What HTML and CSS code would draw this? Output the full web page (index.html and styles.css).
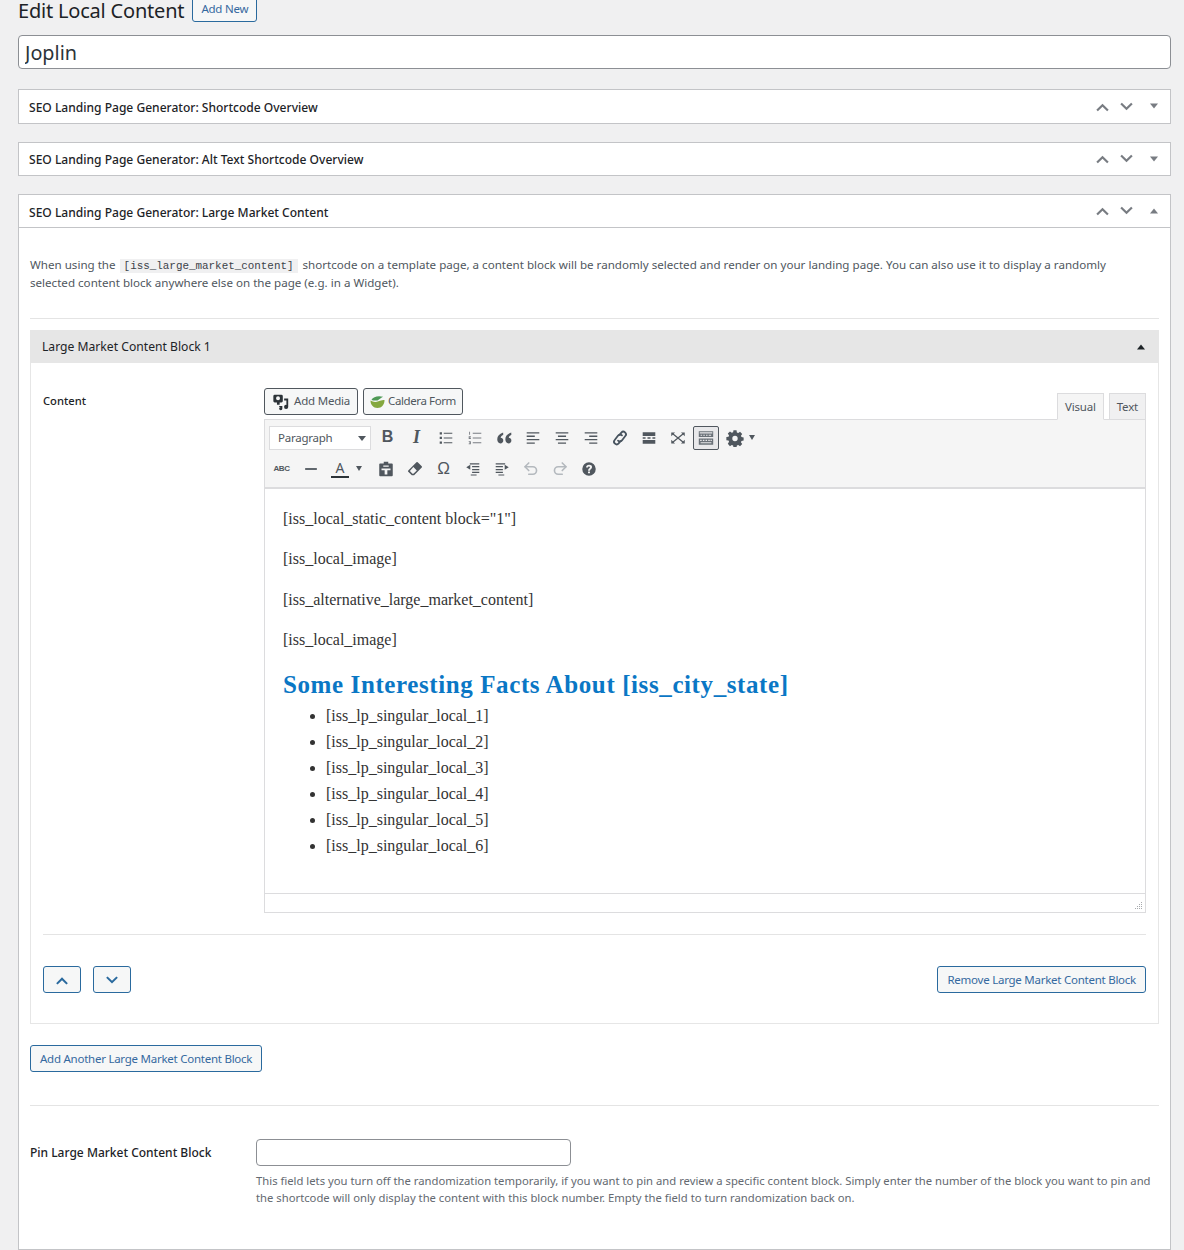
FILE: index.html
```html
<!DOCTYPE html>
<html lang="en">
<head>
<meta charset="utf-8">
<title>Edit Local Content</title>
<link rel="stylesheet" href="styles.css">
</head>
<body>
<div class="wrap">
  <div class="page-head">
    <h1>Edit Local Content</h1>
    <a class="btn add-new">Add New</a>
  </div>
  <input class="title-input" type="text" value="Joplin">

  <section class="postbox closed first">
    <header class="postbox-head">
      <h2>SEO Landing Page Generator: Shortcode Overview</h2>
      <div class="handles">
        <svg class="hicon" viewBox="0 0 20 20"><path d="M3.500 13.500 10 7l6.500 6.500-1.600 1.500L10 10.200 5.100 15z"/></svg>
        <svg class="hicon" viewBox="0 0 20 20"><path d="M3.500 7.500 10 14l6.500-6.500L14.900 6 10 10.800 5.100 6z"/></svg>
        <svg class="hcaret" viewBox="0 0 10 10"><path d="M1 2.500h8L5 7.500z"/></svg>
      </div>
    </header>
  </section>

  <section class="postbox closed">
    <header class="postbox-head">
      <h2>SEO Landing Page Generator: Alt Text Shortcode Overview</h2>
      <div class="handles">
        <svg class="hicon" viewBox="0 0 20 20"><path d="M3.500 13.500 10 7l6.500 6.500-1.600 1.500L10 10.200 5.100 15z"/></svg>
        <svg class="hicon" viewBox="0 0 20 20"><path d="M3.500 7.500 10 14l6.500-6.500L14.900 6 10 10.800 5.100 6z"/></svg>
        <svg class="hcaret" viewBox="0 0 10 10"><path d="M1 2.500h8L5 7.500z"/></svg>
      </div>
    </header>
  </section>

  <section class="postbox open">
    <header class="postbox-head">
      <h2>SEO Landing Page Generator: Large Market Content</h2>
      <div class="handles">
        <svg class="hicon" viewBox="0 0 20 20"><path d="M3.500 13.500 10 7l6.500 6.500-1.600 1.500L10 10.200 5.100 15z"/></svg>
        <svg class="hicon" viewBox="0 0 20 20"><path d="M3.500 7.500 10 14l6.500-6.500L14.900 6 10 10.800 5.100 6z"/></svg>
        <svg class="hcaret" viewBox="0 0 10 10"><path d="M1 7.500h8L5 2.500z"/></svg>
      </div>
    </header>
    <div class="postbox-body">
      <p class="intro">When using the <code>[iss_large_market_content]</code> shortcode on a template page, a content block will be randomly selected and render on your landing page. You can also use it to display a randomly selected content block anywhere else on the page (e.g. in a Widget).</p>

      <div class="group">
        <div class="group-head">
          <span>Large Market Content Block 1</span>
          <svg class="group-caret" viewBox="0 0 10 10"><path d="M1 7.500h8L5 2.500z"/></svg>
        </div>
        <div class="group-body">
          <div class="field-row">
            <div class="field-label">Content</div>
            <div class="editor">
              <div class="editor-top">
                <div class="media-buttons">
                  <a class="btn-dark">
                    <svg class="media-icon" viewBox="0 0 20 20"><path fill-rule="evenodd" d="M1.500 3.500A1.500 1.500 0 0 1 3 2h7.500A1.500 1.500 0 0 1 12 3.500V9a1.500 1.500 0 0 1-1.500 1.500h-2v2.500H5.500v-2.500H3A1.500 1.500 0 0 1 1.500 9zM4.500 5.800a2.200 2.200 0 1 0 4.400 0 2.200 2.200 0 0 0-4.400 0z"/><path d="M13.500 6H18v9.500a2.300 2.300 0 1 1-2-2.300V8.200h-2.500z"/><path d="M8 14.500h3.500v2.700a1.800 1.800 0 1 1-1.800-1.700H8z"/></svg>
                    <span>Add Media</span>
                  </a>
                  <a class="btn-dark caldera">
                    <svg class="caldera-icon" viewBox="0 0 16 16"><path d="M.5 7c2.500 1.500 5.500 2 8.500.8 2.200-.9 4.300-1.600 6.500-1.300 0 5-3 8.500-7.500 8.500S.5 11.500.5 7z" fill="#84a83f"/><path d="M1.500 6.300C3.500 3 8.500 1.500 14 3c-2 1-3.800 3-6 3.800-2.200.5-4.500.2-6.500-.5z" fill="#4f9a56"/></svg>
                    <span>Caldera Form</span>
                  </a>
                </div>
                <div class="tabs">
                  <span class="tab active">Visual</span>
                  <span class="tab tab-text">Text</span>
                </div>
              </div>
              <div class="editor-box">
                <div class="toolbar">
                  <div class="tool-row">
                    <div class="format-select"><span>Paragraph</span><i class="caret big"></i></div>
                    <span class="tool glyph-b">B</span>
                    <span class="tool glyph-i">I</span>
                    <span class="tool"><svg viewBox="0 0 20 20"><path d="M3 3.500h2.500V6H3zM3 8.700h2.500v2.500H3zM3 14h2.500v2.500H3zM7.500 4.200H17v1H7.500zM7.500 9.500H17v1H7.500zM7.500 14.700H17v1H7.500z"/></svg></span>
                    <span class="tool"><svg class="light" viewBox="0 0 20 20"><path d="M3.500 3h1v3.500h-1zM3 8h2.400v1.200H4v.6h1.400V11H3zM3 13.500h2.400V17H3v-.8h1.300v-.5H3.500v-.8h.8v-.5H3zM7.500 4.200H17v1H7.500zM7.500 9.500H17v1H7.500zM7.500 14.700H17v1H7.500z"/></svg></span>
                    <span class="tool"><svg viewBox="0 0 20 20"><path d="M9 4C4.800 5.400 2.500 8 2.500 11.500 2.500 14.300 4 16 6 16s3.200-1.400 3.200-3.200-1.300-3-3-3c.3-1.300 1.300-2.400 3-3.300zM18 4c-4.200 1.400-6.500 4-6.500 7.500 0 2.800 1.500 4.500 3.500 4.500s3.200-1.400 3.200-3.200-1.300-3-3-3c.3-1.300 1.300-2.400 3-3.300z"/></svg></span>
                    <span class="tool"><svg viewBox="0 0 20 20"><path d="M3 3.500h14V5H3zM3 7.300h9v1.500H3zM3 11.100h14v1.500H3zM3 15h9v1.500H3z"/></svg></span>
                    <span class="tool"><svg viewBox="0 0 20 20"><path d="M3 3.500h14V5H3zM5.500 7.300h9v1.500h-9zM3 11.100h14v1.500H3zM5.500 15h9v1.500h-9z"/></svg></span>
                    <span class="tool"><svg viewBox="0 0 20 20"><path d="M3 3.500h14V5H3zM8 7.300h9v1.500H8zM3 11.100h14v1.500H3zM8 15h9v1.500H8z"/></svg></span>
                    <span class="tool"><svg class="stroked link" viewBox="0 0 20 20"><path d="M9.500 6.500l2-2.500a2.900 2.900 0 0 1 4.400 3.800l-3.800 4.900a2.900 2.900 0 0 1-4.300.2"/><path d="M10.500 13.500l-2 2.500a2.900 2.900 0 0 1-4.400-3.800l3.800-4.900a2.900 2.900 0 0 1 4.300-.2"/></svg></span>
                    <span class="tool"><svg viewBox="0 0 20 20"><path d="M3 3.500h14v4.200H3zM3 9.300h3.200v1.400H3zM8.300 9.300h3.400v1.400H8.300zM13.800 9.300H17v1.400h-3.200zM3 12.300h14v4.200H3z"/></svg></span>
                    <span class="tool"><svg viewBox="0 0 20 20"><path d="M2.500 3.800h4.200L2.500 8zM17.500 3.800h-4.200L17.500 8zM2.500 16.200h4.200L2.500 12zM17.500 16.200h-4.200l4.200-4.200z"/><path class="x-lines" d="M4.500 5.500 15.500 14.500M15.500 5.500 4.500 14.500"/></svg></span>
                    <span class="tool kitchen"><svg viewBox="0 0 20 20"><path fill-rule="evenodd" d="M2 2.500h16V9H2zM3 3.500v1.600h14V3.500zM4 6.400v1h1.700v-1zM7 6.400v1h1.700v-1zM10 6.400v1h1.700v-1zM13 6.400v1h2.700v-1zM2 10.500h16v7H2zM3.500 12v1.200h1.700V12zM6.500 12v1.200h1.700V12zM9.500 12v1.200h1.700V12zM12.500 12v1.200h1.700V12zM15 12v1.200h1.500V12zM4 14.700v1.200h12v-1.200z"/></svg></span>
                    <span class="tool gear"><svg viewBox="0 0 20 20"><path fill-rule="evenodd" d="M8.300 1.500h3.400l.4 2.400 1.500.6 2-1.400 2.400 2.400-1.400 2 .6 1.500 2.400.4v3.400l-2.400.4-.6 1.500 1.400 2-2.400 2.400-2-1.400-1.500.6-.4 2.400H8.300l-.4-2.400-1.500-.6-2 1.400L2 16.300l1.400-2-.6-1.500-2.400-.4V9l2.400-.4.6-1.500L2 5.100l2.400-2.400 2 1.400 1.500-.6zM10 7.500a3 3 0 1 0 0 6 3 3 0 0 0 0-6z"/></svg><i class="caret"></i></span>
                  </div>
                  <div class="tool-row second">
                    <span class="tool abc">ABC</span>
                    <span class="tool"><svg viewBox="0 0 20 20"><path d="M3.500 9h13v2h-13z"/></svg></span>
                    <span class="tool color"><span class="color-a">A</span><i class="caret"></i></span>
                    <span class="tool"><svg viewBox="0 0 20 20"><path fill-rule="evenodd" d="M7.500 2h5v1.800H16.500a1 1 0 0 1 1 1V17a1 1 0 0 1-1 1h-13a1 1 0 0 1-1-1V4.800a1 1 0 0 1 1-1h4zM7 6v1.500h6V6zM5 9.500v1.800h3.500V16h3v-4.700H15V9.500z"/></svg></span>
                    <span class="tool"><svg viewBox="0 0 20 20"><path fill-rule="evenodd" d="M13 2.500l4.500 4.500a1 1 0 0 1 0 1.400L9 17H6.500l-4-4a1 1 0 0 1 0-1.400L11.600 2.500a1 1 0 0 1 1.400 0zM8.200 7.800l-3.900 4.500 2.900 2.900h1l3.800-3.600z"/></svg></span>
                    <span class="tool omega">Ω</span>
                    <span class="tool"><svg viewBox="0 0 20 20"><path d="M6.500 3.500H17V5H6.500zM9 6.700h8v1.400H9zM9 9.900h8v1.400H9zM9 13.100h8v1.400H9zM7.500 16H14v1.200H7.500zM2.500 8 7 5.200v5.600z"/></svg></span>
                    <span class="tool"><svg viewBox="0 0 20 20"><path d="M3 3.500h10.500V5H3zM3 6.700h8v1.400H3zM3 9.900h8v1.400H3zM3 13.100h8v1.400H3zM6 16h6.500v1.200H6zM17.500 8 13 5.200v5.600z"/></svg></span>
                    <span class="tool"><svg class="stroked dim" viewBox="0 0 20 20"><path d="M3.500 7.500H12a4 4 0 0 1 0 8.300H7.500"/><path d="M7.500 3.300 3.300 7.500l4.200 4.200"/></svg></span>
                    <span class="tool"><svg class="stroked dim" viewBox="0 0 20 20"><path d="M16.500 7.500H8a4 4 0 0 0 0 8.300h4.500"/><path d="M12.500 3.300l4.200 4.200-4.200 4.200"/></svg></span>
                    <span class="tool"><svg viewBox="0 0 20 20"><path fill-rule="evenodd" d="M10 2.500a7.500 7.500 0 1 1 0 15 7.500 7.500 0 0 1 0-15zM8.900 12.800v2h2.200v-2zM6.800 8.400h2c0-.8.500-1.300 1.200-1.300s1.100.4 1.100 1c0 1.300-2.200 1.400-2.200 3.900h2.200c0-1.700 2.300-1.800 2.300-4.100 0-1.600-1.400-2.500-3.300-2.500-2 0-3.300 1.200-3.300 3z"/></svg></span>
                  </div>
                </div>
                <div class="editor-content">
                  <p>[iss_local_static_content block="1"]</p>
                  <p>[iss_local_image]</p>
                  <p>[iss_alternative_large_market_content]</p>
                  <p>[iss_local_image]</p>
                  <h2>Some Interesting Facts About [iss_city_state]</h2>
                  <ul>
                    <li>[iss_lp_singular_local_1]</li>
                    <li>[iss_lp_singular_local_2]</li>
                    <li>[iss_lp_singular_local_3]</li>
                    <li>[iss_lp_singular_local_4]</li>
                    <li>[iss_lp_singular_local_5]</li>
                    <li>[iss_lp_singular_local_6]</li>
                  </ul>
                </div>
                <div class="statusbar">
                  <svg class="grip" viewBox="0 0 9 9"><path d="M7 1h1v1H7zM5 3h1v1H5zM7 3h1v1H7zM3 5h1v1H3zM5 5h1v1H5zM7 5h1v1H7zM1 7h1v1H1zM3 7h1v1H3zM5 7h1v1H5zM7 7h1v1H7z"/></svg>
                </div>
              </div>
            </div>
          </div>
          <div class="group-actions">
            <div class="shift-buttons">
              <a class="btn shift"><svg viewBox="0 0 20 20"><path d="M3.500 13.500 10 7l6.500 6.500-1.600 1.500L10 10.200 5.100 15z"/></svg></a>
              <a class="btn shift"><svg viewBox="0 0 20 20"><path d="M3.500 7.500 10 14l6.500-6.500L14.900 6 10 10.800 5.100 6z"/></svg></a>
            </div>
            <a class="btn wide">Remove Large Market Content Block</a>
          </div>
        </div>
      </div>

      <div class="add-row"><a class="btn wide">Add Another Large Market Content Block</a></div>

      <div class="pin-row">
        <label class="pin-label">Pin Large Market Content Block</label>
        <div class="pin-field">
          <input class="pin-input" type="text">
          <p class="pin-desc">This field lets you turn off the randomization temporarily, if you want to pin and review a specific content block. Simply enter the number of the block you want to pin and the shortcode will only display the content with this block number. Empty the field to turn randomization back on.</p>
        </div>
      </div>
    </div>
  </section>
</div>
</body>
</html>
```

FILE: styles.css
```css
* { box-sizing: border-box; }
html, body { margin: 0; padding: 0; }
body {
  background: #f0f0f1;
  color: #3c434a;
  font-family: "Noto Sans", "Open Sans", sans-serif;
  font-size: 12px;
  line-height: 1.4;
  height: 1250px;
  overflow: hidden;
}
.wrap { margin: -3px 13px 0 18px; }

.page-head { display: flex; align-items: center; height: 27px; gap: 8px; }
h1 { margin: -1px 0 0; font-size: 20px; letter-spacing: -.2px; font-weight: 400; color: #1d2327; line-height: 27px; }

.btn {
  display: inline-flex;
  align-items: center;
  justify-content: center;
  height: 27px;
  padding: 0 9px;
  background: #f6f7f7;
  border: 1px solid #2a6a9e;
  border-radius: 3px;
  color: #35699f;
  font-size: 11.5px;
  letter-spacing: -.25px;
  white-space: nowrap;
}
.btn.wide { padding-top: 1px; }
.add-new { width: 65px; height: 25px; padding: 0; margin-top: -2px; }

.title-input {
  display: block;
  width: 100%;
  height: 34px;
  margin: 11px 0 20px;
  padding: 0 6px;
  border: 1px solid #8c8f94;
  border-radius: 4px;
  background: #fff;
  color: #2c3338;
  font-family: inherit;
  font-size: 19.800px;
}

.postbox { background: #fff; border: 1px solid #c3c4c7; margin-bottom: 18px; }
.postbox.closed { height: 34px; }
.postbox.first { height: 35px; }
.postbox-head { display: flex; align-items: center; justify-content: space-between; height: 100%; padding: 0 11px 0 10px; }
.postbox.open .postbox-head { height: 33px; border-bottom: 1px solid #c3c4c7; }
.postbox-head h2 { margin: 2px 0 0; font-size: 12.050px; font-weight: 500; color: #1d2327; line-height: 1; }
.postbox.first .postbox-head h2 { margin-top: 3px; }
.postbox.open .postbox-head h2 { margin-top: 4px; }
.handles { display: flex; align-items: center; gap: 5px; margin-top: -1px; }
.hicon { width: 19px; height: 19px; fill: #787c82; }
.hcaret { width: 10px; height: 10px; fill: #787c82; margin-left: 8px; }

.postbox-body { padding: 28px 11px 0; }
.intro { margin: 0; color: #50575e; font-size: 11.600px; line-height: 18px; padding: 0 30px 26px 0; border-bottom: 1px solid #e4e4e4; }
code {
  background: #f0f0f1;
  padding: 1px 4px;
  margin: 0 2px 0 1px;
  font-family: "Liberation Mono", "DejaVu Sans Mono", monospace;
  font-size: 10.900px;
  line-height: 1;
  color: #3c434a;
}

.group { margin-top: 11px; border: 1px solid #e6e6e6; }
.group-head { display: flex; align-items: center; justify-content: space-between; height: 32px; padding: 0 12px 0 11px; background: #e6e6e6; color: #1d2327; font-size: 12.150px; }
.group-caret { width: 10px; height: 10px; fill: #1d2327; }
.group-body { padding: 25px 12px 30px; }

.field-row { display: flex; }
.field-label { width: 221px; padding-top: 5px; color: #1d2327; font-size: 11.200px; font-weight: 500; }
.editor { flex: 1; min-width: 0; }
.editor-top { display: flex; justify-content: space-between; align-items: flex-end; height: 31px; }
.media-buttons { display: flex; gap: 5px; align-self: flex-start; }
.btn-dark {
  display: inline-flex;
  align-items: center;
  height: 27px;
  padding: 0 7px;
  border: 1px solid #50575e;
  border-radius: 3px;
  background: #f6f7f7;
  color: #50575e;
  font-size: 11.500px;
  letter-spacing: -.2px;
  gap: 4px;
}
.caldera { gap: 3px; padding: 0 6px; letter-spacing: -.4px; }
.media-icon { width: 18px; height: 18px; fill: #2c3338; }
.caldera-icon { width: 15px; height: 15px; }
.tabs { display: flex; gap: 5px; margin-bottom: -1px; position: relative; }
.tab { height: 27px; line-height: 25px; padding: 0 7px; border: 1px solid #dcdcde; background: #f0f0f1; color: #50575e; font-size: 11.500px; letter-spacing: -.2px; }
.tab.active { background: #f5f5f5; border-bottom-color: #f5f5f5; }

.editor-box { border: 1px solid #dcdcde; }
.toolbar { background: #f5f5f5; height: 69px; border-bottom: 2px solid #dcdcde; padding: 2px 0 0 3px; }
.tool-row { display: flex; align-items: center; height: 31px; }
.tool-row.second { margin-left: -1px; }
.format-select {
  display: flex;
  align-items: center;
  justify-content: space-between;
  width: 102px;
  height: 24px;
  margin: 1px 2px 0 1px;
  padding: 0 4px 0 8px;
  background: #fff;
  border: 1px solid #dcdcde;
  color: #50575e;
  font-size: 11.500px;
  letter-spacing: -.25px;
}
.tool {
  display: flex;
  align-items: center;
  justify-content: center;
  flex: none;
  width: 29px;
  height: 27px;
  color: #50575e;
}
.tool svg { width: 18px; height: 18px; fill: #50575e; }
.tool svg.light { fill: #787c82; }
.tool svg.stroked { fill: none; stroke: #50575e; stroke-width: 1.800; stroke-linecap: round; stroke-linejoin: round; }
.tool svg.link { stroke: #47535e; stroke-width: 2; }
.tool svg.dim { stroke: #b4b9be; }
.x-lines { fill: none; stroke: #50575e; stroke-width: 1.400; }
.glyph-b { font-family: "Liberation Sans", sans-serif; font-weight: 700; font-size: 16px; }
.glyph-i { font-family: "Liberation Serif", serif; font-style: italic; font-weight: 700; font-size: 18px; }
.kitchen { border: 1px solid #50575e; border-radius: 2px; background: #e8e8ea; width: 26px; height: 24px; margin: 0 2px 0 1px; }
.kitchen svg { fill: #6a7178; }
.gear { width: 46px; justify-content: flex-start; padding-left: 5px; gap: 5px; }
.caret { display: block; width: 0; height: 0; border: 3.500px solid transparent; border-top: 5px solid #50575e; border-bottom: 0; }
.caret.big { border-width: 5px 4px 0; }
.abc { font-family: "Liberation Sans", sans-serif; font-size: 8px; font-weight: 700; letter-spacing: -.5px; }
.color { width: 46px; justify-content: flex-start; gap: 7px; padding-left: 6px; }
.color-a { display: block; width: 18px; text-align: center; font-size: 14px; line-height: 17px; border-bottom: 2px solid #2c3338; }
.omega { font-size: 17px; font-family: "Liberation Sans", sans-serif; }

.editor-content { height: 404px; background: #fff; padding: 19px 18px 0; font-family: "Liberation Serif", serif; font-size: 16px; line-height: 21px; color: #333; }
.editor-content p { margin: 0 0 19.400px; }
.editor-content h2 { margin: 16px 0 3px; font-size: 25px; letter-spacing: .6px; line-height: 30px; font-weight: 700; color: #0a77c5; }
.editor-content ul { margin: 0; padding-left: 43px; }
.editor-content li { line-height: 26px; }
.statusbar { position: relative; height: 19px; background: #fff; border-top: 1px solid #dcdcde; }
.grip { position: absolute; right: 2px; bottom: 2px; width: 9px; height: 9px; fill: #a7aaad; }

.group-actions { display: flex; justify-content: space-between; margin-top: 21px; padding-top: 31px; border-top: 1px solid #e4e4e4; }
.shift-buttons { display: flex; gap: 12px; }
.shift { width: 38px; padding: 0; }
.shift svg { width: 18px; height: 18px; fill: #2a6a9e; }

.add-row { padding: 21px 0 33px; border-bottom: 1px solid #e4e4e4; }
.pin-row { display: flex; padding: 33px 0 43px; }
.pin-label { width: 226px; padding-top: 6px; color: #1d2327; font-size: 12px; font-weight: 500; }
.pin-input { display: block; width: 315px; height: 27px; border: 1px solid #8c8f94; border-radius: 4px; background: #fff; }
.pin-field { flex: 1; min-width: 0; }
.pin-desc { margin: 6px 0 0; color: #646970; font-size: 11.280px; line-height: 17px; }
```
